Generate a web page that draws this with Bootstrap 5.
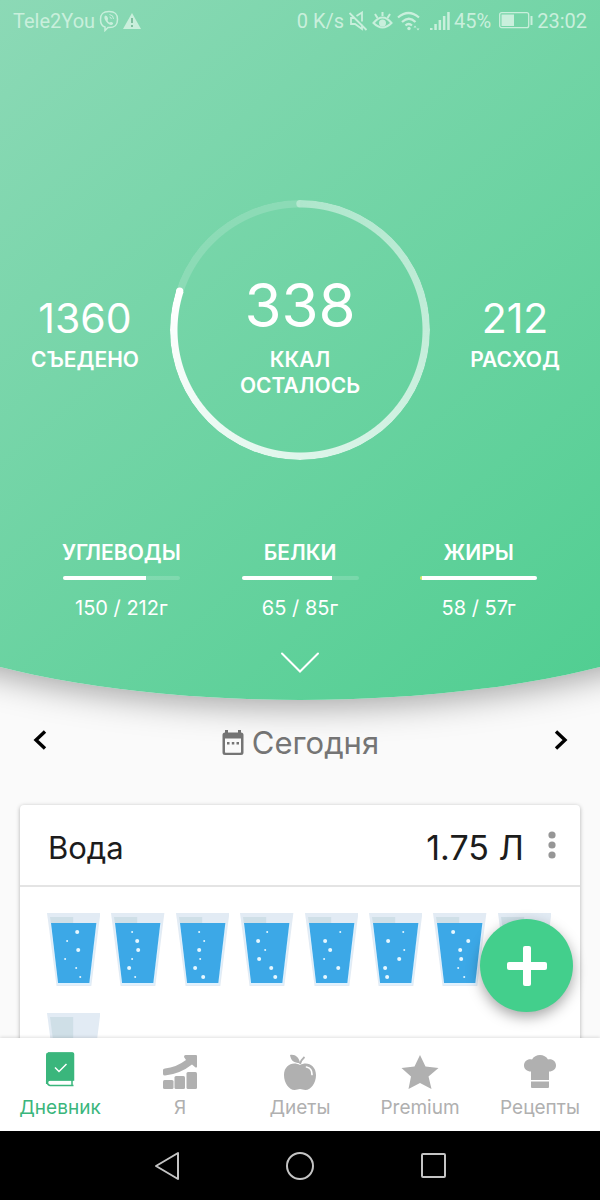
<!DOCTYPE html>
<html lang="ru">
<head>
<meta charset="utf-8">
<meta name="viewport" content="width=device-width, initial-scale=1">
<title>Дневник</title>
<link href="https://cdn.jsdelivr.net/npm/bootstrap@5.3.0/dist/css/bootstrap.min.css" rel="stylesheet">
<style>
body { font-family: Inter, "Noto Sans", sans-serif; background: #fafafa; line-height: 1.2; }
svg { display: block; flex: none; }
.hero { height: 700px; z-index: 1; }
.hero::before {
  content: ""; position: absolute; z-index: -1; top: 0; bottom: 0; left: -30%; right: -30%;
  border-radius: 0 0 50% 50% / 0 0 150px 150px;
  background: linear-gradient(140deg, #8cd9b6 10%, #50ce91 90%);
  box-shadow: 0 6px 34px rgba(0,0,0,.36);
}
.status { height: 41px; padding: 0 13px; font: 20px/24px Roboto, sans-serif; color: #c9efdc; }
.summary { margin-top: 159px; }
.ring { width: 260px; height: 260px; }
.ring-shape { position: absolute; inset: 0; z-index: -1; border-radius: 50%;
  background: conic-gradient(rgba(255,255,255,.42), #fff 80%, rgba(255,255,255,.16) 80%);
  mask: radial-gradient(closest-side, transparent 122px, #000 123px);
  -webkit-mask: radial-gradient(closest-side, transparent 122px, #000 123px); }
.ring-caps { position: absolute; inset: 0; z-index: -1; }
.ring-value { font-size: 60px; line-height: 64px; margin-top: 73px; }
.caption { font-size: 21px; font-weight: 600; line-height: 26px; }
.ring-caption { margin-top: 10px; }
.side { margin-top: 97px; }
.side-value { font-size: 41px; font-weight: 400; line-height: 42px; }
.side .caption { margin-top: 8px; }
.macros { margin-top: 80px; padding: 0 32px; }
.macros .progress { width: 117px; height: 4px; margin: 10px auto 16px; border-radius: 2px; background: rgba(255,255,255,.16); }
.macros .progress-bar { background: #fff; }
.macros .over { border-left: 2px solid #d8ec6a; }
.amount { font-size: 20px; line-height: 24px; }
.plain { background: none; border: 0; padding: 0; color: inherit; }
.expand { margin-top: 32px; }
.dates { padding: 22px 32px 0 33px; height: 105px; color: #000; }
.today { font-size: 31px; line-height: 42px; color: #757575; }
.water { margin: 0 20px; border: 0; border-radius: 4px; box-shadow: 0 1px 4px rgba(0,0,0,.3); height: 600px; }
.water-head { height: 82px; padding: 6px 24px 0 28px; border-bottom: 2px solid #e4e4e4; color: #1c1c1c; }
.water-title { font-size: 31px; font-weight: 400; }
.water-sum { font-size: 34px; }
.glasses { display: grid; grid-template-columns: repeat(8, 1fr); gap: 27px 11px; padding: 26px 29px 26px 27px; }
.glasses svg { width: 100%; height: 73px; }
.fab { position: absolute; right: 27px; bottom: 26px; width: 93px; height: 93px; border-radius: 50%; background: #43cf8c; box-shadow: 0 5px 14px rgba(0,0,0,.35); }
.tabs { height: 93px; background: #fff; box-shadow: 0 -1px 3px rgba(0,0,0,.12); z-index: 2; }
.tabs a { flex: 1 1 0; color: #b0b0b0; text-decoration: none; font-size: 19px; line-height: 24px; padding-top: 13px; }
.tabs a.active { color: #3ab67c; }
.tabs svg { height: 39px; margin: 0 auto 6px; }
.system { height: 69px; background: #000; color: #c4c4c4; gap: 93px; }
</style>
</head>
<body>
<div class="vh-100 d-flex flex-column overflow-hidden">
  <header class="hero position-relative flex-shrink-0 text-white">
    <div class="status d-flex align-items-center">
      <span>Tele2You</span>
      <svg class="ms-1" width="20" height="22" viewBox="0 0 20 22" fill="none" stroke="currentColor" stroke-width="1.5"><path d="M10 1.5c6 0 8.5 2 8.5 8s-2.500 8-8.500 8H9l-3 3v-3.500C2.500 16 1.500 14 1.500 9.500c0-6 2.500-8 8.500-8z"/><path d="M6.500 5.500c-2 1-1 4 1 6.500s5 4 6.500 2c1-1.200-1.800-2.800-2.700-1.800-1 1.100-3.300-1.700-2.500-2.500 1-1-.8-4.200-2.300-4.200z" fill="currentColor" stroke="none"/><path d="M10.500 4.500q4 .5 4 4.500M10.500 7q1.800.2 1.800 2" stroke-width="1"/></svg>
      <svg class="ms-1" width="18" height="16" viewBox="0 0 18 16"><path d="M9 0l9 16H0z" fill="currentColor"/><path d="M9 5v5M9 12v2" stroke="#7fbf9f" stroke-width="2"/></svg>
      <span class="ms-auto">0 K/s</span>
      <svg class="ms-1" width="20" height="20" viewBox="0 0 20 20" fill="none" stroke="currentColor" stroke-width="1.800"><path d="M1.500 2l17 17M7 7H3v6h4l7 5v-4.500M8.500 5L14 1.500V10.500"/></svg>
      <svg class="ms-1" width="21" height="20" viewBox="0 0 21 20" fill="none" stroke="currentColor" stroke-width="2"><path d="M1.500 12q9-11 18 0-9 9-18 0z"/><circle cx="10.500" cy="12" r="2.500" fill="currentColor"/><path d="M10.500 1v4M3 3l2.500 4M18 3l-2.500 4"/></svg>
      <svg class="ms-1" width="25" height="20" viewBox="0 0 25 20" fill="none" stroke="currentColor" stroke-width="2.200"><path d="M1 6.500q10.500-9 21 0M5 11q7-6.500 13.500 0M8.500 14.500q3-3 6.500 0"/><circle cx="12" cy="17.500" r="1.700" fill="currentColor" stroke="none"/><path d="M16.500 16.500l1.500-2 1.500 2zM19.500 17.500h3l-1.500 2z" fill="currentColor" stroke="none"/></svg>
      <svg class="ms-2 me-1" width="20" height="20" viewBox="0 0 20 20" fill="currentColor"><path d="M0 17h2.500v2H0zM4.300 13h2.500v6H4.300zM8.600 9h2.500v10H8.600zM12.900 5h2.500v14h-2.500zM17.200 1h2.500v18h-2.500z"/></svg>
      <span>45%</span>
      <svg class="ms-2 me-1" width="34" height="17" viewBox="0 0 34 17"><rect x=".7" y=".7" width="29" height="15" rx="2" fill="none" stroke="currentColor" stroke-width="1.300"/><path d="M2.500 2.500h12.500v11.500h-12.500zM31.500 4h2v9h-2z" fill="currentColor"/></svg>
      <span>23:02</span>
    </div>

    <div class="summary d-flex text-center">
      <div class="side flex-fill w-25"><div class="side-value">1360</div><div class="caption">СЪЕДЕНО</div></div>
      <div class="ring position-relative flex-shrink-0">
        <div class="ring-shape"></div>
        <svg class="ring-caps" viewBox="0 0 260 260"><circle cx="9.700" cy="91" r="3.600" fill="#fff"/><path d="M130 0a3.700 3.700 0 0 0 0 7.400z" fill="#fff" fill-opacity=".36"/></svg>
        <div class="ring-value">338</div>
        <div class="caption ring-caption">ККАЛ<br>ОСТАЛОСЬ</div>
      </div>
      <div class="side flex-fill w-25"><div class="side-value">212</div><div class="caption">РАСХОД</div></div>
    </div>

    <div class="macros d-flex text-center">
      <div class="flex-fill w-25"><div class="caption">УГЛЕВОДЫ</div><div class="progress"><div class="progress-bar" style="width:71%"></div></div><div class="amount">150 / 212г</div></div>
      <div class="flex-fill w-25"><div class="caption">БЕЛКИ</div><div class="progress"><div class="progress-bar" style="width:77%"></div></div><div class="amount">65 / 85г</div></div>
      <div class="flex-fill w-25"><div class="caption">ЖИРЫ</div><div class="progress over"><div class="progress-bar" style="width:100%"></div></div><div class="amount">58 / 57г</div></div>
    </div>
    <button class="plain expand d-block mx-auto" aria-label="Развернуть"><svg width="40" height="22" viewBox="0 0 40 22" fill="none" stroke="currentColor" stroke-width="2" stroke-linecap="round"><path d="M2 1.500l18 18 18-18"/></svg></button>
  </header>

  <main class="flex-grow-1 overflow-hidden position-relative" style="min-height:0">
    <div class="dates d-flex justify-content-between align-items-start">
      <button class="plain mt-2" aria-label="Назад"><svg width="14" height="20" viewBox="0 0 14 20" fill="none" stroke="currentColor" stroke-width="3.400"><path d="M12 1.500L3 10l9 8.500"/></svg></button>
      <button class="plain today d-flex"><svg class="me-2 mt-2" width="22" height="26" viewBox="0 0 22 26"><path d="M3 2.500V0h3v2.500h10V0h3v2.500q2.500 0 2.500 2.500v17.500Q21.500 25 19 25H3Q.5 25 .5 22.500V5Q.5 2.500 3 2.500zM3 8.500v13.500q0 .7.700.7h14.600q.7 0 .7-.7V8.500z" fill="currentColor" fill-rule="evenodd"/><path d="M5 12h2.500v2.500H5zM9.800 12h2.500v2.500H9.800zM14.500 12H17v2.500h-2.500z" fill="currentColor"/></svg>Сегодня</button>
      <button class="plain mt-2" aria-label="Вперёд"><svg width="14" height="20" viewBox="0 0 14 20" fill="none" stroke="currentColor" stroke-width="3.400"><path d="M2 1.500l9 8.500-9 8.500"/></svg></button>
    </div>
    <section class="card water">
      <div class="water-head d-flex align-items-center">
        <h2 class="water-title mb-0 me-auto">Вода</h2>
        <span class="water-sum me-4">1.75 Л</span>
        <button class="plain" aria-label="Меню"><svg width="8" height="40" viewBox="0 0 8 40" fill="#969696"><circle cx="4" cy="7" r="3.600"/><circle cx="4" cy="17" r="3.600"/><circle cx="4" cy="27" r="3.600"/></svg></button>
      </div>
      <div class="glasses" id="glasses"></div>
    </section>
    <button class="plain fab text-white" aria-label="Добавить"><svg class="mx-auto" width="40" height="40" viewBox="0 0 40 40" fill="currentColor"><rect x="16" width="8" height="40" rx="2"/><rect y="16" width="40" height="8" rx="2"/></svg></button>
  </main>

  <nav class="tabs d-flex flex-shrink-0 text-center">
    <a class="active" href="#"><svg width="30" viewBox="0 0 30 39"><path d="M3 2h24.500q1 0 1 1v26H5q-2.500 0-2.500 2.500T5 34.500h23.500" fill="none" stroke="currentColor" stroke-width="1.500"/><path d="M3.500 1.500H27q1.500 0 1.500 1.500V29.500H1V3.500Q1 1.500 3.500 1.500z" fill="currentColor"/><path d="M27 29v5M1.700 29v4" stroke="currentColor" stroke-width="1.500"/><path d="M10 16.500l4 4 7.500-7.500" fill="none" stroke="#fff" stroke-width="1.500"/></svg>Дневник</a>
    <a href="#"><svg width="34" viewBox="0 0 34 39" fill="currentColor"><path d="M2 17.500q11-1 21-8.500L21 6Q21 4 22.500 4H33q1 0 1 1v11q-1 1-2 0l-3-2.500Q17 23 2 24.500q-2 0-2-1.500v-4q0-1.500 2-1.500z"/><rect y="29" width="10.500" height="9" rx="1.500"/><rect x="11.500" y="25" width="10.500" height="13" rx="1.500"/><rect x="23.500" y="21" width="10.500" height="17" rx="1.500"/></svg>Я</a>
    <a href="#"><svg width="34" viewBox="0 0 34 39"><path d="M17 14c-7-4-16 0-16 10 0 8 5 15 10.500 15 2.500 0 3.500-1 5.500-1s3 1 5.500 1C28 39 33 32 33 24c0-10-9-14-16-10zM7 4c5-1 9 2 10 8-6 0-9-2-10-8z" fill="currentColor"/><path d="M17 13q1-4 4.500-7" stroke="currentColor" fill="none" stroke-width="1.800"/><path d="M23.500 16q5.500 1 5.500 7.500" stroke="#fff" fill="none" stroke-width="1.700" stroke-linecap="round"/></svg>Диеты</a>
    <a href="#"><svg width="38" viewBox="0 0 38 39"><path d="M19 4l5.500 11.500 13 1.500-10 8.500L30.500 38 19 32 7.500 38l2.500-12.500-9.500-8.500 13-1.500z" fill="currentColor"/></svg>Premium</a>
    <a href="#"><svg width="34" viewBox="0 0 34 39" fill="currentColor"><path d="M8 29V20.500C4 20.500 1 18 1 14.500 1 10 5 7.500 9 8.500c3-6 13-6 16 0 4-1 8 1.500 8 6 0 3.500-3 6-7 6V29zM8 30.500h18v5.500q0 1-1 1H9q-1 0-1-1z"/></svg>Рецепты</a>
  </nav>
  <div class="system d-flex flex-shrink-0 justify-content-center align-items-center">
    <button class="plain" aria-label="Back"><svg width="40" height="30" viewBox="0 0 40 30" fill="none" stroke="currentColor" stroke-width="2" stroke-linejoin="round"><path d="M26 2v26L4 15z"/></svg></button>
    <button class="plain" aria-label="Home"><svg width="30" height="30" viewBox="0 0 30 30" fill="none" stroke="currentColor" stroke-width="2"><circle cx="15" cy="15" r="13"/></svg></button>
    <button class="plain" aria-label="Recent"><svg width="40" height="30" viewBox="0 0 40 30" fill="none" stroke="currentColor" stroke-width="2"><rect x="14" y="3" width="23" height="23" rx="1"/></svg></button>
  </div>
</div>
<script>
// Bubble positions per glass: x of each of the six rows; negative means a small bubble.
const glasses = [
  [30,-20,31,-18,-29,-33], [-21,26,27,-21,18,-24], [-23,-28,23,-24,19,27], [-27,18,-25,19,31,35],
  [-35,20,25,-19,33,20], [-34,19,-35,30,16,18], [20,35,27,28,-25,-31], null, null
];
document.getElementById('glasses').innerHTML = glasses.map(b =>
  '<svg viewBox="0 0 53 73" preserveAspectRatio="none" role="img" aria-label="Стакан">' +
  '<path d="M0 0H53L44 73H9.500z" fill="#e2ebf4"/><path d="M3 4H26V66H11z" fill="#cfdfe7"/>' +
  (b ? '<path d="M3 10H50L43 72H10.500z" fill="#dff1fe"/><path d="M4 10H49L42 70H11z" fill="#3ca8e7"/>' +
    b.map((x, i) => `<circle cx="${Math.abs(x)}" cy="${19 + i * 9}" r="${x < 0 ? 1 : 2}" fill="#e6f7ff"/>`).join('') : '') +
  '</svg>').join('');
</script>
<script src="https://cdn.jsdelivr.net/npm/bootstrap@5.3.0/dist/js/bootstrap.bundle.min.js"></script>
</body>
</html>
